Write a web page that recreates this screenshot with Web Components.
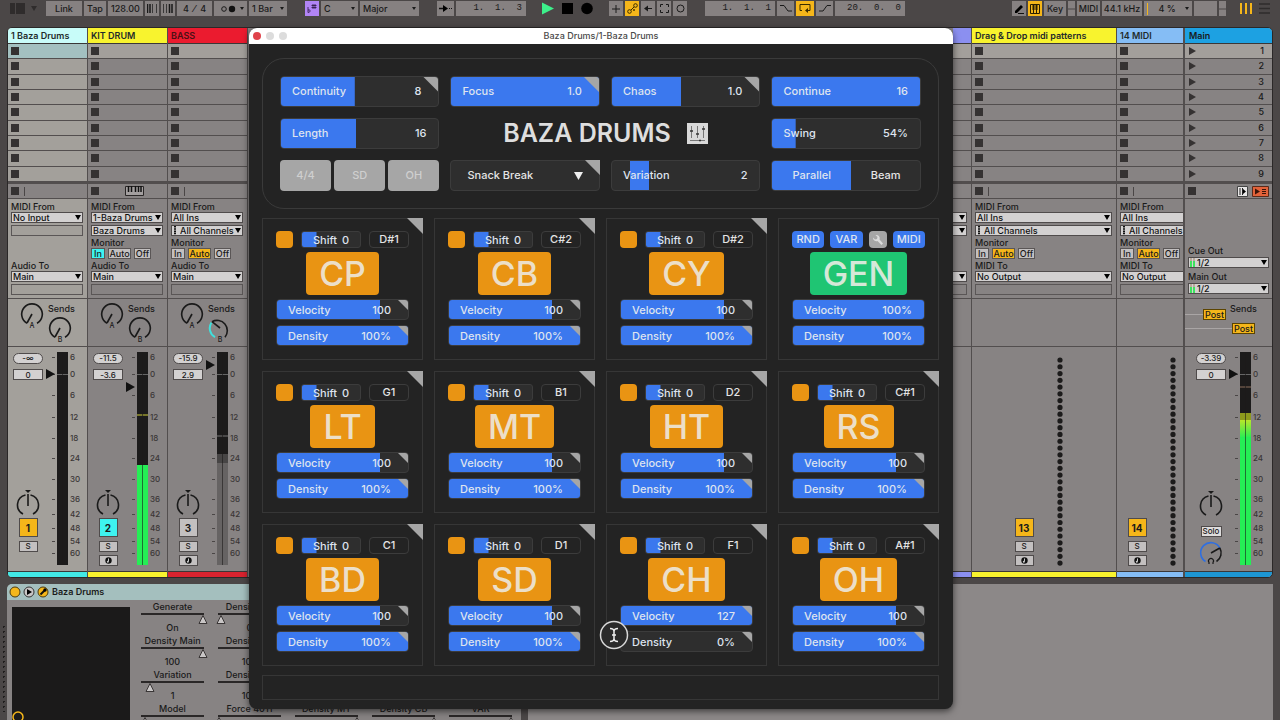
<!DOCTYPE html>
<html lang="en">
<head>
<meta charset="utf-8">
<title>Baza Drums</title>
<style>
  html, body { margin: 0; height: 100%; overflow: hidden; background: #4b4747; }
  body { font: 500 9px/12px Inter, "Liberation Sans", sans-serif; color: #1a1a1a; }
</style>
</head>
<body>
<live-app></live-app>
<script>
const BASE = `*{box-sizing:border-box}button,input,select{font:inherit;color:inherit;margin:0;padding:0;border:0;border-radius:0;background:none;appearance:none;outline:none}svg{display:block}[hidden]{display:none}`;
const define = (name, css, html, ready) => {
  customElements.define(name, class extends HTMLElement {
    connectedCallback() {
      if (this.shadowRoot) return;
      const root = this.attachShadow({ mode: 'open' });
      const t = document.createElement('template');
      const get = (k, d = '') => this.getAttribute(k) ?? d;
      t.innerHTML = `<style>${BASE}${css}</style>` + (typeof html === 'function' ? html(get, this) : html);
      root.append(t.content.cloneNode(true));
      if (ready) ready(root, this);
    }
  });
};

/* ---------- Transport bar ---------- */
define('bar-cell', `
  :host{display:flex;height:15px;width:var(--w,14px)}
  button{flex:1;min-width:0;display:flex;align-items:center;justify-content:center;background:#868181;white-space:pre;line-height:15px}
  :host([tone=gold]) button{background:#f5b61a}
  :host([tone=violet]) button{background:#b184f5}
  :host([mono]) button{font:9px/15px "Liberation Mono",monospace;justify-content:flex-end;padding-right:4px}
  :host([drop]) button{justify-content:space-between;padding:0 3px}
  i{width:0;height:0;border:2px solid transparent;border-top:3px solid #1a1a1a;border-bottom:0}`,
  (g, el) => `<button aria-label="${g('label')}"><slot></slot>${el.hasAttribute('drop') ? '<i></i>' : ''}</button>`);

define('live-transport', `
  :host{display:flex;gap:18px;padding:1px 10px 0 10px;height:28px}
  div{display:flex;gap:2px}
  .right{margin-left:auto}
  .pre{gap:5px;align-items:center;height:15px;margin-right:7px}
  .run{gap:8px;margin:0 -2px}`, `
  <div>
    <div class="pre"><svg width="16" height="11" fill="#2f2c2c"><path d="M0 0h5v11H0zM6 0h9v11H6z"/></svg><svg width="6" height="5" fill="#2f2c2c"><path d="M0 0h6L3 5z"/></svg></div>
    <bar-cell style="--w:36px">Link</bar-cell><bar-cell style="--w:22px">Tap</bar-cell><bar-cell style="--w:35px">128.00</bar-cell>
    <bar-cell label="Nudge down"><svg width="10" height="9" stroke="#1a1a1a"><path d="M.5 0v9M3 0v9" stroke-width="1.5"/><path d="M5.500 0v9M9.500 0v9" stroke-width=".7"/></svg></bar-cell>
    <bar-cell label="Nudge up"><svg width="10" height="9" stroke="#1a1a1a"><path d="M.5 0v9M3.500 0v9" stroke-width=".7"/><path d="M6.500 0v9M9 0v9" stroke-width="1.5"/></svg></bar-cell>
    <bar-cell style="--w:35px">4  ⁄  4</bar-cell>
    <bar-cell style="--w:33px" drop label="Metronome"><svg width="20" height="8"><circle cx="7" cy="4" r="2.300" fill="none" stroke="#1a1a1a"/><circle cx="15" cy="4" r="3.200" fill="#111"/></svg></bar-cell>
    <bar-cell style="--w:38px" drop>1 Bar</bar-cell>
  </div>
  <div>
    <bar-cell tone="violet" label="Scale"><svg width="10" height="9" stroke="#2a1440" fill="none" stroke-width=".8"><path d="M1 3v5.500c3-.5 3-3 0-2.500M6 0v5M8 0v5M4.500 1.500h5M4.500 3.500h5"/></svg></bar-cell>
    <bar-cell style="--w:37px" drop>C</bar-cell><bar-cell style="--w:59px" drop>Major</bar-cell>
  </div>
  <div>
    <bar-cell style="--w:17px" label="Follow"><svg width="13" height="7"><path d="M0 3.500h5" stroke="#111" stroke-width="1.500"/><path d="M4 0l5 3.500-5 3.500z"/><path d="M10 3.500h3" stroke="#111" stroke-dasharray="1 1"/></svg></bar-cell>
    <bar-cell mono style="--w:70px">1.  1.  3</bar-cell>
  </div>
  <div class="run">
    <svg width="12" height="15"><path d="M0 1.500L12 7.500 0 13.500z" fill="#3df08b"/></svg>
    <svg width="11" height="15"><path d="M0 2h11v11H0z"/></svg>
    <svg width="12" height="15"><circle cx="6" cy="7.500" r="5.800"/></svg>
  </div>
  <div>
    <bar-cell label="Overdub"><svg width="8" height="8" stroke="#1a1a1a"><path d="M4 0v8M0 4h8"/></svg></bar-cell>
    <bar-cell tone="gold" label="Automation arm"><svg width="11" height="11" stroke="#3a2c00" fill="none"><circle cx="2.500" cy="8.500" r="1.800"/><circle cx="8.500" cy="2.500" r="1.800"/><path d="M4 7l3-3"/><circle cx="7" cy="7" r=".6"/></svg></bar-cell>
    <bar-cell label="Re-enable"><svg width="8" height="7" stroke="#1a1a1a"><path d="M2 3.500h6"/><path d="M0 3.500l4-3v6z" fill="#1a1a1a" stroke="none"/></svg></bar-cell>
    <bar-cell label="Capture"><svg width="9" height="9" stroke="#1a1a1a" fill="none"><path d="M.5 3V.5H3M6 .5h2.500V3M8.500 6v2.500H6M3 8.500H.5V6"/></svg></bar-cell>
    <bar-cell label="Session record"><svg width="9" height="9" stroke="#1a1a1a" fill="none"><circle cx="4.500" cy="4.500" r="3.500"/></svg></bar-cell>
  </div>
  <div>
    <bar-cell mono style="--w:70px">1.  1.  1</bar-cell>
    <bar-cell style="--w:17px" label="Punch in"><svg width="12" height="7" stroke="#1a1a1a" fill="none"><path d="M0 .5h4l4 5.500h4"/></svg></bar-cell>
    <bar-cell style="--w:18px" tone="gold" label="Loop"><svg width="12" height="9" stroke="#3a2c00" fill="none"><path d="M3 6.500H1V.5h10v6H7"/><path d="M9 4v5L6 6.500z" fill="#3a2c00" stroke="none"/></svg></bar-cell>
    <bar-cell style="--w:17px" label="Punch out"><svg width="12" height="7" stroke="#1a1a1a" fill="none"><path d="M0 6h4L8 .5h4"/></svg></bar-cell>
    <bar-cell mono style="--w:70px">20.  0.  0</bar-cell>
  </div>
  <div class="right">
    <bar-cell label="Draw"><svg width="10" height="10"><path d="M1 7L7 1l2 2-6 6H1z"/><path d="M4 9.500h6" stroke="#111"/></svg></bar-cell>
    <bar-cell tone="gold" label="MIDI keyboard"><svg width="10" height="10" stroke="#2a1f00" fill="none"><path d="M.5.500h9v9h-9zM3.500 0v10M6.500 0v10"/><path d="M3.500 0v6M6.500 0v6" stroke-width="2"/></svg></bar-cell>
    <bar-cell style="--w:22px">Key</bar-cell>
    <bar-cell style="--w:7px" label="Key in out"><svg width="7" height="2" stroke="#4b4747"><path d="M0 1h7"/></svg></bar-cell>
    <bar-cell style="--w:23px">MIDI</bar-cell><bar-cell style="--w:40px">44.1 kHz</bar-cell>
    <bar-cell style="--w:48px" drop><svg width="2" height="12"><path d="M0 0h1v12H0z" fill="#f5b61a"/></svg>4 %</bar-cell>
    <bar-cell style="--w:23px" label="Disk"></bar-cell>
    <bar-cell style="--w:7px" label="MIDI in out"><svg width="7" height="2" stroke="#4b4747"><path d="M0 1h7"/></svg></bar-cell>
    <svg width="42" height="15"><path d="M13 2v11M18 2v11M23 2v11" stroke="#f5b61a" stroke-width="2"/><path d="M31 3h11M31 7.500h11M31 12h11" stroke="#2f2c2c" stroke-width="1.500"/></svg>
  </div>`);

/* ---------- Mixer parts ---------- */
define('route-select', `
  :host{display:grid;height:11px}
  :host>*{grid-area:1/1}
  select{width:100%;min-width:0;height:11px;line-height:9px;background:#d3d1d1;border:1px solid #4f4b4b;padding-left:var(--pad,1px);color:#111}
  svg{place-self:center end;margin-right:2px;pointer-events:none}
  svg.pre{place-self:center start;margin:0 0 0 2px}`,
  (g) => {
    const mark = g('mark');
    return `<select aria-label="${g('label', 'Routing')}" style="--pad:${mark ? 8 : 1}px"><option>${g('value')}</option></select>
    ${mark === 'midi' ? '<svg class="pre" width="4" height="9"><path d="M2 0v9" stroke="#111" stroke-width="2" stroke-dasharray="1.500 .7"/></svg>' : ''}
    ${mark === 'out' ? '<svg class="pre" width="5" height="9"><path d="M1 3v6M4 3v6" stroke="#3de35e" stroke-width="2"/><path d="M1 0v3M4 0v3" stroke="#b8a89a" stroke-width="2"/></svg>' : ''}
    <svg width="6" height="5"><path d="M0 0h6L3 5z"/></svg>`;
  });

define('send-knob', `:host{display:block}text{font:500 7px Inter,sans-serif;fill:#1a1a1a}`,
  (g) => {
    const on = g('on');
    return `<svg width="24" height="28" fill="none" stroke="#1a1a1a" stroke-width="1.600">
    ${on ? '<path d="M4 5.700A10.300 10.300 0 0 1 17 21.200"/><path d="M7 21.200A10.300 10.300 0 0 1 3.500 6.500" stroke="#3fe0dc" stroke-width="2"/><path d="M12 12L4 5.700"/>' : '<path d="M7 21.200A10.300 10.300 0 1 1 17 21.200"/><path d="M12 12L7 21"/>'}
    <text x="12" y="26" text-anchor="middle" stroke="none">${g('name')}</text></svg>`;
  });

define('level-meter', `:host{display:block}text{font:500 8px Inter,sans-serif;fill:#3a3636}`,
  (g) => {
    const marks = [[8, '6'], [25, '0'], [46, '6'], [68, '12'], [89, '18'], [109, '24'], [130, '30'], [150, '36'], [165, '42'], [179, '48'], [192, '54'], [204, '60']];
    const lit = { off: '', green: '<path d="M12 116h11v100H12z" fill="#25ee55"/><path d="M12 66h11" stroke="#d2d03a"/>',
      gray: '<path d="M12 105h11v9H12z" fill="#474545"/><path d="M12 114h11v102H12z" fill="#666363"/><path d="M12 87h11" stroke="#777"/>',
      main: '<defs><linearGradient id="g" x2="0" y2="1"><stop offset="0" stop-color="#b9e62a"/><stop offset="1" stop-color="#25ee55"/></linearGradient></defs><path d="M12 64h11v8H12z" fill="#8e9a1c"/><path d="M12 71h11v18H12z" fill="url(#g)"/><path d="M12 88h11v128H12z" fill="#25ee55"/><path d="M12 38h11" stroke="#8a6f5c"/>' }[g('lit', 'off')];
    const a = +g('fader', 25);
    return `<svg width="42" height="217">
      <path d="M12 3h11v213H12z" fill="#1c1b1b"/><path d="M12 25.500h11" stroke="#666"/>${lit}
      <path d="M17.500 3v213" stroke="#1c1b1b" stroke-opacity=".6"/>
      ${marks.map(([y, t]) => `<path d="M7 ${y + .5}h3" stroke="#4a4646"/><text x="25" y="${y + 3}">${t}</text>`).join('')}
      <path d="M1 ${a - 5}l9 5-9 5z" fill="#111"/></svg>`;
  });

const PAN = `<svg width="24" height="26" fill="none" stroke="#1a1a1a" stroke-width="1.600"><path d="M7 24A10.200 10.200 0 0 1 9.500 5M14.500 5A10.200 10.200 0 0 1 17 24M12 4v12"/><path d="M9 0h6l-3 3z" fill="#1a1a1a" stroke="none"/></svg>`;
const KEYS = `<svg width="19" height="10"><path d="M.5.500h18v9H.5z" fill="#a39f9f" stroke="#2a2727"/><path d="M3.500 0v6M6.500 0v6M10.500 0v6M13.500 0v6M16 0v6" stroke="#111" stroke-width="1.500"/></svg>`;

define('live-track', `
  :host{display:block;overflow:hidden;width:80px;border-right:1px solid #524e4e;background:var(--bg,#878383);--line:#524e4e}
  :host([selected]){--bg:#a3a09b}
  .in{min-width:79px;height:100%;display:flex;flex-direction:column}
  header{height:16px;line-height:15px;padding-left:3px;background:var(--c);font-weight:600;white-space:nowrap;border-bottom:1px solid #3a3737;color:var(--hc,#1f2b2b)}
  .clips{height:138px;display:grid;grid-template-rows:repeat(9,1fr)}
  .clips div{border-bottom:1px solid var(--line);display:flex;align-items:center;padding-left:3px}
  .clips div:first-child{background:var(--first,#a39f9b)}
  .sq{width:8px;height:8px;background:#353232}
  .stat{height:17px;border-top:2px solid var(--line);border-bottom:1px solid var(--line);display:flex;align-items:center;padding-left:3px;background:#878383}
  .stat b{margin-left:5px;width:1px;height:9px;background:#4a4646}
  .stat svg{margin-left:26px}
  .io{height:100px;padding:1px 4px 0 3px;border-bottom:1px solid var(--line)}
  label,.lab{display:block;height:12px;line-height:13px}
  .gap{margin-top:2px}
  .blank{height:11px;border:1px solid #5a5656}
  .mon{display:flex;gap:3px;height:11px}
  .mon button{border:1px solid #5a5656;background:#c3c0c0;line-height:9px;width:23px;height:11px}
  .mon button:first-child{width:14px}.mon button:last-child{width:17px}
  .mon .gold{background:#f5b61a}.mon .cyan{background:#3ef3f0}
  .sends{height:48px;border-bottom:1px solid var(--line);padding:3px 0 0 12px;display:flex;gap:4px}
  .sends .lab{margin-bottom:2px}
  .mix{height:224px;width:80px;margin:0 auto;display:flex;gap:2px;padding:2px 0 0 5px}
  .in.narrow .mix{margin:0}
  .ctl{width:30px;display:flex;flex-direction:column;align-items:center;padding:4px 0 5px}
  output,.ctl input{width:30px;height:11px;line-height:9px;border:1px solid #4f4b4b;background:#d3d1d1;text-align:center;font-size:8px}
  output{border-radius:6px;margin-bottom:5px}
  .pan{margin:auto 0 2px}
  .num{width:19px;height:19px;border:1px solid #4f4b4b;background:var(--n,#f5b61a);font-size:10px;font-weight:700;margin-bottom:4px}
  .s{width:19px;height:11px;border:1px solid #4f4b4b;background:#c3c0c0;line-height:9px;margin-bottom:3px;font-size:8px;display:grid;place-items:center}
  .s:last-child{margin-bottom:0}
  .ghost{visibility:hidden}
  .foot{height:6px;background:var(--f,var(--c));border-top:1px solid #3a3737}
  :host([peek]){width:19px}
  :host([peek]) .in{width:79px;margin-left:-61px}`,
  (g, el) => {
    const midi = el.hasAttribute('midi'), peek = el.hasAttribute('peek'), mon = g('monitor');
    const mb = (t, c) => `<button class="${mon === t ? c : ''}">${t}</button>`;
    const body = peek
      ? `<div class="lab"></div><route-select></route-select><route-select class="gap"></route-select>
         <div style="height:35px"></div><route-select></route-select><div class="blank gap"></div>`
      : `<label>MIDI From</label><route-select value="${g('from')}" label="MIDI From"></route-select>
      ${mon ? `<route-select class="gap" value="${g('chan')}" ${g('chan') === 'All Channels' ? 'mark="midi"' : ''} label="Channel"></route-select>
        <div class="lab">Monitor</div><div class="mon">${mb('In', 'cyan')}${mb('Auto', 'gold')}${mb('Off', 'gold')}</div>`
        : '<div class="blank gap"></div><div style="height:23px"></div>'}
      <label>${midi ? 'MIDI To' : 'Audio To'}</label><route-select value="${g('to')}" label="Output"></route-select><div class="blank gap"></div>`;
    const mix = peek ? '' : `<div class="ctl">${midi ? '' : `<output>${g('peak')}</output><input aria-label="Volume" value="${g('vol')}">`}
      <span class="pan">${midi ? '' : PAN}</span>
      <button class="num">${g('num')}</button><button class="s">S</button>
      <button class="s ${el.hasAttribute('noarm') ? 'ghost' : ''}" aria-label="Arm"><svg width="7" height="7"><circle cx="3.500" cy="3.500" r="3.200" fill="#111"/><path d="M3.500 1.500v3" stroke="#ccc"/><circle cx="2.800" cy="4.700" r="1" fill="#ccc"/></svg></button></div>
      ${midi ? `<svg width="38" height="217">${Array.from({ length: 31 }, (_, i) => `<circle cx="19" cy="${11 + i * 6.77}" r="2.600" fill="#1c1b1b"/>`).join('')}</svg>`
        : `<level-meter lit="${g('lit', 'off')}" fader="${g('fader', 25)}"></level-meter>`}`;
    return `<div class="in ${g('name') === '14 MIDI' ? 'narrow' : ''}"><header>${g('name')}</header>
    <div class="clips">${'<div><span class="sq"></span></div>'.repeat(9)}</div>
    <div class="stat"><span class="sq"></span>${el.hasAttribute('keys') ? KEYS : '<b></b>'}</div>
    <div class="io">${body}</div>
    <div class="sends">${midi ? '' : `<send-knob name="A"></send-knob><div><div class="lab">Sends</div><send-knob name="B" ${el.hasAttribute('sendb') ? 'on="1"' : ''}></send-knob></div>`}</div>
    <div class="mix">${mix}</div>
    <div class="foot"></div></div>`;
  });

define('main-track', `
  :host{display:flex;flex-direction:column;width:88px;background:#878383;border-left:1px solid #524e4e;--line:#524e4e;border-radius:0 4px 4px 0;overflow:hidden}
  header{height:16px;line-height:15px;padding-left:4px;background:#1da1e2;font-weight:600;border-bottom:1px solid #3a3737}
  ol{list-style:none;margin:0;padding:0;height:138px;display:grid;grid-template-rows:repeat(9,1fr)}
  li{border-bottom:1px solid var(--line);display:flex;align-items:center;justify-content:space-between;padding:0 8px 0 4px}
  li:first-child{background:#a39f9b}
  .stat{height:17px;border-top:2px solid var(--line);border-bottom:1px solid var(--line);display:flex;align-items:center;gap:4px;padding:0 3px}
  .sq{width:8px;height:8px;background:#353232;margin-right:auto}
  .io{height:100px;border-bottom:1px solid var(--line);padding:0 3px 4px;display:flex;flex-direction:column;justify-content:flex-end}
  label{height:12px;line-height:12px}
  .io route-select:first-of-type{margin-bottom:3px}
  .sends{height:48px;border-bottom:1px solid var(--line);padding-top:3px}
  .sends i{height:1px;background:#a9a5a5}
  .sends button{width:23px;height:11px;border:1px solid #5c4400;background:#f5b61a;line-height:9px}
  .row{display:flex;align-items:center;height:13px}
  .mix{height:224px;display:flex;gap:2px;padding:2px 0 0 11px}
  .ctl{width:30px;display:flex;flex-direction:column;align-items:center;padding:4px 0 6px}
  output,input{width:30px;height:11px;line-height:9px;border:1px solid #4f4b4b;background:#d3d1d1;text-align:center;font-size:8px}
  output{border-radius:6px;margin-bottom:5px}
  .pan{margin:auto 0 9px}
  .solo{width:21px;height:11px;border:1px solid #4f4b4b;background:#dedcdc;line-height:9px;font-size:8px;margin-bottom:4px}
  .foot{height:6px;background:#1d96d3;border-top:1px solid #3a3737}`,
  `<header>Main</header><ol>${Array.from({ length: 9 }, (_, i) => `<li><svg width="7" height="8"><path d="M0 0l7 4-7 4z" fill="#353232"/></svg>${i + 1}</li>`).join('')}</ol>
  <div class="stat"><span class="sq"></span><svg width="11" height="11"><path d="M.5.500h10v10H.5z" fill="#e8e6e6" stroke="#444"/><path d="M3 2v7M5.500 2v7" stroke="#222"/><path d="M6 3l3 2.500L6 8z"/></svg>
    <svg width="17" height="11"><path d="M.5.500h16v10H.5z" fill="#e2623a" stroke="#5a2a1a"/><path d="M3 2.500l5 3-5 3zM10 3h4v1h-4zM10 5h4v1h-4zM10 7h4v1h-4z" fill="#3a1408"/></svg></div>
  <div class="io"><label>Cue Out</label><route-select mark="out" value="1/2" label="Cue Out"></route-select><label>Main Out</label><route-select mark="out" value="1/2" label="Main Out"></route-select></div>
  <div class="sends"><div class="row" style="padding-left:45px">Sends</div>
    <div class="row" style="margin-top:-7px"><i style="width:18px"></i><button>Post</button></div><div class="row" style="margin-top:1px"><i style="width:47px"></i><button>Post</button></div></div>
  <div class="mix"><div class="ctl"><output>-3.39</output><input aria-label="Main volume" value="0"><span class="pan">${PAN}</span><button class="solo">Solo</button>
    <svg width="24" height="24" fill="none" stroke-width="1.600"><path d="M6 20.200A10.200 10.200 0 0 1 20.700 6.800" stroke="none"/><path d="M6.500 20.500A10.200 10.200 0 1 1 20.800 6.900" stroke="#2f6fe0"/><path d="M20.800 6.900A10.200 10.200 0 0 1 17.500 20.500M12 12l8.800-5" stroke="#1a1a1a"/><path d="M10 23v-1.500a2.500 2.500 0 1 1 4 0V23" stroke="#1a1a1a" stroke-width="1.200"/></svg></div>
    <level-meter lit="main"></level-meter></div><div class="foot"></div>`);

define('live-session', `
  :host{display:flex;margin:-1px 7px 0;border:1px solid #2b2828;border-radius:5px;overflow:hidden;background:#878383}
  live-track{flex:none}
  .more{flex:1;background:#878383}
  .wide{width:145px}.cut{width:67px}`, `
  <live-track selected noarm name="1 Baza Drums" style="--c:#c8fcf9;--f:#42e9e6;--first:#a3c0c0" from="No Input" to="Main" peak="-∞" vol="0" num="1"></live-track>
  <live-track keys name="KIT DRUM" style="--c:#f8f32e;--n:#3ef3f0" from="1-Baza Drums" chan="Baza Drums" monitor="In" to="Main" peak="-11.5" vol="-3.6" num="2" lit="green" fader="38"></live-track>
  <live-track sendb name="BASS" style="--c:#eb1b2f;--f:#d9232f;--n:#c3c0c0;--hc:#4a1015" from="All Ins" chan="All Channels" monitor="Auto" to="Main" peak="-15.9" vol="2.9" num="3" lit="gray" fader="16"></live-track>
  <div class="more"></div>
  <live-track midi peek style="--c:#8b8ff0"></live-track>
  <live-track midi class="wide" name="Drag &amp;amp; Drop midi patterns" style="--c:#f8f32e" from="All Ins" chan="All Channels" monitor="Auto" to="No Output" num="13"></live-track>
  <live-track midi class="cut" name="14 MIDI" style="--c:#85bdf5" from="All Ins" chan="All Channels" monitor="Auto" to="No Output" num="14"></live-track>
  <main-track></main-track>`);

/* ---------- Device view ---------- */
define('device-param', `
  :host{display:block;text-align:center;height:34px;white-space:nowrap}
  .l{height:13px;line-height:13px}
  .t{height:10px;border-top:2px solid #2a2727}
  svg{margin-left:var(--at,0)}
  .v{line-height:10px;height:10px}`,
  (g) => `<div class="l"><slot></slot></div><div class="t"><svg width="10" height="9" style="--at:${g('at', '0')}px"><path d="M5 .5l4 8H1z" fill="#c9c6c6" stroke="#3a3636"/></svg></div><div class="v">${g('value')}</div>`);

define('live-device', `
  :host{flex:1;min-height:0;display:flex;margin:6px 7px 0 0;overflow:hidden}
  .grip{width:7px;flex:none;background:radial-gradient(circle,#1f1d1d 1px,transparent 1px) 1px 0/5px 5px;margin:40px 0 8px}
  .grip2{width:7px;flex:none;background:#4b4747}
  .dev{width:514px;flex:none;background:#878383;border-radius:5px 0 0 0;overflow:hidden}
  header{display:flex;align-items:center;gap:2px;height:16px;padding-left:2px;background:#a4bfbe;font-weight:600}
  header span{margin-left:1px}
  .body{display:flex;gap:11px;padding:7px 4px 0 5px}
  .disp{width:118px;height:130px;background:#1b1a1a;flex:none}
  .disp svg{margin:104px 0 0}
  .params{display:grid;grid-template-columns:repeat(5,63px);column-gap:14px;grid-template-rows:repeat(4,34px);margin-top:-7px}
  .rest{flex:1;background:#8c8888}
  .b{grid-row:4}`, `
  <div class="grip"></div>
  <section class="dev"><header>
    <svg width="12" height="12"><circle cx="6" cy="6" r="5" fill="#f5b61a" stroke="#4a3a10"/></svg>
    <svg width="12" height="12"><circle cx="6" cy="6" r="5" fill="#c9c6c6" stroke="#333"/><path d="M4 3l5 3-5 3z"/></svg>
    <svg width="12" height="12"><circle cx="6" cy="6" r="5" fill="#f5b61a" stroke="#4a3a10"/><path d="M3.500 8.500l4-4" stroke="#111" stroke-width="2"/><circle cx="8" cy="4" r="1.700"/></svg>
    <span>Baza Drums</span></header>
    <div class="body"><div class="disp"><svg width="12" height="12"><circle cx="6" cy="6" r="5" fill="none" stroke="#f5b61a" stroke-width="1.500"/></svg></div>
    <div class="params">
      <device-param at="57" value="On">Generate</device-param><device-param at="-2" value="0">Density SD</device-param>
      <device-param at="57" value="100" style="grid-column:1">Density Main</device-param><device-param at="57" value="100">Density SD</device-param>
      <device-param at="4" value="1" style="grid-column:1">Variation</device-param><device-param at="57" value="100">Density SD</device-param>
      <device-param class="b" at="-1" style="grid-column:1">Model</device-param><device-param class="b" at="-4">Force 4011</device-param>
      <device-param class="b" at="57">Density MT</device-param><device-param class="b" at="57">Density CB</device-param><device-param class="b" at="57">VAR</device-param>
    </div></div></section>
  <div class="grip2"></div><div class="rest"></div>`);

/* ---------- Plug-in window ---------- */
define('param-slider', `
  :host{display:grid;height:31px;border-radius:4px;border:1px solid #3c3c3c;background:#2e2e2e;overflow:hidden;font-size:11px;line-height:14px;color:#e4e4e4}
  :host([small]){height:21px}
  :host([tiny]){height:17px;width:60px;border-radius:3px}
  :host>*{grid-area:1/1;min-width:0}
  input{width:100%;height:100%;background:linear-gradient(#3b78ee,#3b78ee) var(--from,0) 0/var(--fill) 100% no-repeat}
  input::-webkit-slider-thumb{appearance:none;width:1px;height:1px}
  .t{display:flex;align-items:center;justify-content:space-between;padding:0 12px 1px 11px;pointer-events:none}
  :host([corner]) .t{padding-right:17px}
  :host([small]) .t{padding-bottom:0}
  :host([tiny]) .t{padding:0 11px 0 11px}
  label,output{color:#dfe4ee}
  .c{width:15px;height:15px;justify-self:end;background:#a6a6a6;clip-path:polygon(0 0,100% 0,100% 100%);pointer-events:none}
  :host([small]) .c{width:10px;height:10px}`,
  (g, el) => `<input id="r" type="range" min="0" max="100" value="${parseInt(g('fill'))}" style="--fill:${g('fill')};--from:${g('from', '0')}">
    <span class="t"><label for="r">${g('name')}</label><output for="r">${g('value')}</output></span>${el.hasAttribute('corner') ? '<i class="c"></i>' : ''}`);

define('pad-card', `
  :host{display:block;position:relative;height:142px;border:1px solid #363636;padding:12px 13px 0;font-size:11px;color:#e4e4e4}
  .row{display:flex;height:17px;gap:8px;margin-bottom:4px}
  .led{width:17px;border-radius:4px;background:#e99413}
  .note{flex:1;border:1px solid #3c3c3c;border-radius:4px;line-height:15px;text-align:center}
  .name{display:block;height:43px;margin:0 auto 4px;padding:0 13px;border-radius:4px;background:#e99413;color:#ecdfc8;font-size:34px;line-height:43px;font-weight:500}
  param-slider+param-slider{margin-top:5px}
  .corner{position:absolute;top:-1px;right:-1px;width:16px;height:16px;background:#a6a6a6;clip-path:polygon(0 0,100% 0,100% 100%)}`,
  (g) => `<i class="corner"></i><div class="row"><button class="led" aria-label="Enable ${g('name')}"></button><param-slider tiny name="Shift" value="0" fill="25%"></param-slider><button class="note">${g('note')}</button></div>
    <button class="name">${g('name')}</button>
    <param-slider small corner name="Velocity" value="${g('vel', '100')}" fill="${g('vel', '100') === '127' ? '100%' : '79%'}"></param-slider>
    <param-slider small corner name="Density" value="${g('den', '100')}%" fill="${g('den', '100')}%"></param-slider>`);

define('gen-card', `
  :host{display:block;height:142px;border:1px solid #363636;padding:12px 13px 0;font-size:11px;color:#dfe4ee}
  .row{display:flex;height:17px;gap:6px;margin-bottom:4px}
  .row button{flex:1;border-radius:4px;background:#3b78ee;line-height:17px}
  .row .w{flex:0 0 18px;background:#a6a6a6;display:grid;place-items:center}
  .name{display:block;height:43px;margin:0 auto 4px;padding:0 13px;border-radius:4px;background:#1fc573;color:#d5e8d8;font-size:34px;line-height:43px;font-weight:500}
  param-slider+param-slider{margin-top:5px}`,
  `<div class="row"><button>RND</button><button>VAR</button><button class="w" aria-label="Settings"><svg width="12" height="12"><path d="M1 3.500L3 5.500 5 5 5.500 3 3.500 1A3.400 3.400 0 0 1 7.500 5.500L11 9.500 9.500 11 5.500 7A3.400 3.400 0 0 1 1 3.500z" fill="#dcdcdc"/></svg></button><button>MIDI</button></div>
  <button class="name">GEN</button><param-slider small name="Velocity" value="100%" fill="100%"></param-slider><param-slider small name="Density" value="100%" fill="100%"></param-slider>`);

define('plugin-window', `
  :host{display:block;border-radius:8px;background:#232323;box-shadow:0 2px 7px rgba(0,0,0,.6);padding-bottom:9px;color:#e4e4e4}
  header{height:16px;border-radius:8px 8px 0 0;background:#fff;display:grid;grid-template-columns:1fr auto 1fr;align-items:center;color:#4a4a4a;padding:0 4px}
  main{padding:14px 14px 0 13px}
  .top{border:1px solid #3a3a3a;border-radius:22px;padding:17px;display:grid;grid-template-columns:16fr 15fr 15fr 15fr;gap:11px;margin-bottom:9px}
  h1{grid-column:2/4;margin:0;display:flex;align-items:center;justify-content:center;gap:16px;font-size:25px;line-height:31px;font-weight:600;white-space:nowrap;color:#dedede}
  .tri,.seg{display:flex;font-size:11px}
  .tri{gap:3px}
  .tri button{flex:1;border-radius:4px;background:#a6a6a6;color:#cfcfcf;padding-bottom:1px}
  .seg{border:1px solid #3c3c3c;border-radius:4px;overflow:hidden;background:#2e2e2e}
  .seg button{flex:7;padding-bottom:1px}.seg .on{background:#3b78ee;flex:8;color:#dfe4ee}
  .pick{display:grid;height:31px}
  .pick>*{grid-area:1/1;pointer-events:none}
  .pick select{pointer-events:auto;width:100%;border:1px solid #3c3c3c;border-radius:4px;background:#2e2e2e;padding:0 0 1px 16px;font-size:11px}
  .pick .a{place-self:center end;margin-right:17px}
  .pick .c{justify-self:end;width:15px;height:15px;background:#a6a6a6;clip-path:polygon(0 0,100% 0,100% 100%)}
  .pads{display:grid;grid-template-columns:repeat(4,1fr);gap:11px}
  footer{height:25px;border:1px solid #363636;margin-top:9px}`, `
  <header><svg width="40" height="10"><circle cx="4" cy="5" r="4" fill="#e0434b"/><circle cx="17" cy="5" r="4" fill="#dcdcdc"/><circle cx="30" cy="5" r="4" fill="#dcdcdc"/></svg><span>Baza Drums/1-Baza Drums</span></header>
  <main><section class="top">
    <param-slider corner name="Continuity" value="8" fill="47%"></param-slider><param-slider corner name="Focus" value="1.0" fill="100%"></param-slider>
    <param-slider corner name="Chaos" value="1.0" fill="47%"></param-slider><param-slider name="Continue" value="16" fill="100%"></param-slider>
    <param-slider name="Length" value="16" fill="48%"></param-slider>
    <h1>BAZA DRUMS <svg width="21" height="21"><path d="M0 0h21v21H0z" fill="#d9d9d9"/><path d="M4.500 3v12M10.500 3v12M16.500 3v12M3 17.500h15" stroke="#777"/><path d="M3 8h3M9 11h3M15 6h3M12 17.500h2" stroke="#333" stroke-width="1.500"/></svg></h1>
    <param-slider name="Swing" value="54%" fill="16%"></param-slider>
    <div class="tri"><button>4/4</button><button>SD</button><button>OH</button></div>
    <div class="pick"><select aria-label="Preset"><option>Snack Break</option></select><svg class="a" width="9" height="8"><path d="M0 0h9L4.500 8z" fill="#eee"/></svg><i class="c"></i></div>
    <param-slider name="Variation" value="2" fill="13%" from="14%"></param-slider>
    <div class="seg"><button class="on">Parallel</button><button>Beam</button></div>
  </section>
  <section class="pads">
    <pad-card name="CP" note="D#1"></pad-card><pad-card name="CB" note="C#2"></pad-card><pad-card name="CY" note="D#2"></pad-card><gen-card></gen-card>
    <pad-card name="LT" note="G1"></pad-card><pad-card name="MT" note="B1"></pad-card><pad-card name="HT" note="D2"></pad-card><pad-card name="RS" note="C#1"></pad-card>
    <pad-card name="BD" note="C1"></pad-card><pad-card name="SD" note="D1"></pad-card><pad-card name="CH" note="F1" vel="127" den="0"></pad-card><pad-card name="OH" note="A#1"></pad-card>
  </section><footer></footer></main>`);

/* ---------- Desktop ---------- */
define('live-app', `
  :host{display:flex;flex-direction:column;height:100vh;position:relative;overflow:hidden}
  plugin-window{position:absolute;left:249px;top:28px;width:704px}
  .cursor{position:absolute;left:599px;top:620px;pointer-events:none}`, `
  <live-transport></live-transport><live-session></live-session><live-device></live-device>
  <plugin-window></plugin-window>
  <svg class="cursor" width="30" height="30"><circle cx="15" cy="15" r="13.500" fill="#2a2a2a" stroke="#d8d8d8" stroke-width="1.500"/><path d="M11 8.500q4 0 4 3v7q0 3-4 3M19 8.500q-4 0-4 3v7q0 3 4 3M13 15h4" fill="none" stroke="#eee" stroke-width="1.500"/></svg>`);
</script>
</body>
</html>
